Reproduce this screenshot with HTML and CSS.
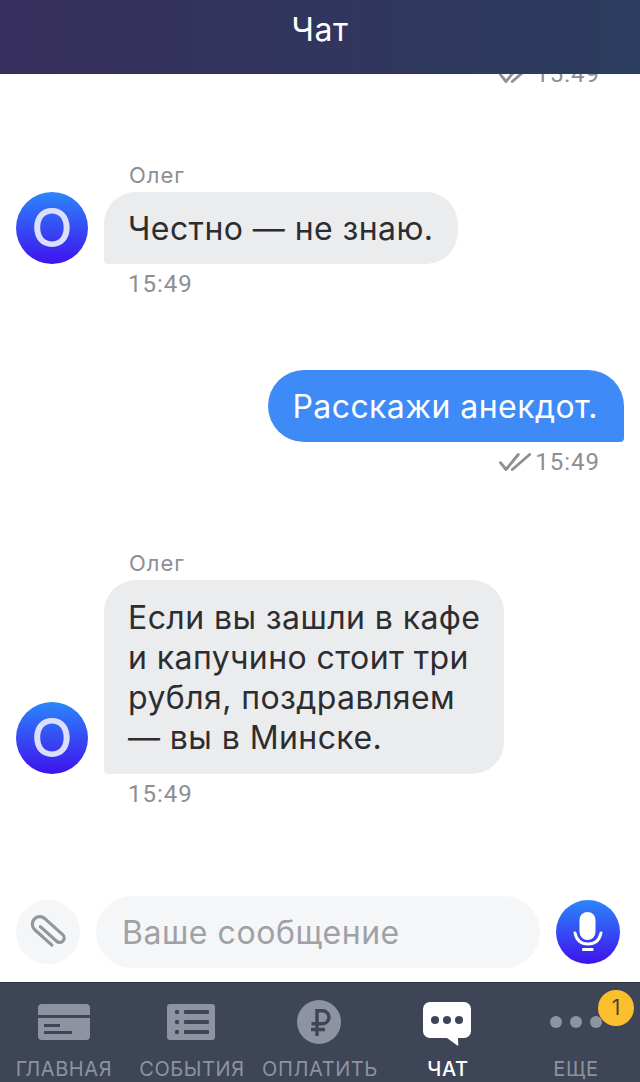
FILE: index.html
```html
<!DOCTYPE html>
<html lang="ru">
<head>
<meta charset="utf-8">
<title>Чат</title>
<link rel="stylesheet" href="styles.css">
</head>
<body>
<div class="app">
  <header class="top"><h1 class="title">Чат</h1></header>
  <main class="feed">
    <div class="clip-time">
      <div class="time-row">
        <svg class="ticks" viewBox="0 0 32 18" width="32" height="18"><path d="M1.500 9.700L7 16.500 19.300 1.500M13.300 16.500L30.700 1.500" fill="none" stroke="#8e8e93" stroke-width="2.800" stroke-linecap="round" stroke-linejoin="round"/></svg>
        <span class="time">15:49</span>
      </div>
    </div>

    <section class="msg in first">
      <div class="name">Олег</div>
      <div class="line">
        <div class="ava">O</div>
        <div class="bubble grey">Честно — не знаю.</div>
      </div>
      <div class="time stamp">15:49</div>
    </section>

    <section class="msg out">
      <div class="bubble blue">Расскажи анекдот.</div>
      <div class="time-row">
        <svg class="ticks" viewBox="0 0 32 18" width="32" height="18"><path d="M1.500 9.700L7 16.500 19.300 1.500M13.300 16.500L30.700 1.500" fill="none" stroke="#8e8e93" stroke-width="2.800" stroke-linecap="round" stroke-linejoin="round"/></svg>
        <span class="time">15:49</span>
      </div>
    </section>

    <section class="msg in second">
      <div class="name">Олег</div>
      <div class="line">
        <div class="ava">O</div>
        <div class="bubble grey wide">Если вы зашли в кафе<br>и капучино стоит три<br>рубля, поздравляем<br>— вы в Минске.</div>
      </div>
      <div class="time stamp">15:49</div>
    </section>
  </main>

  <div class="composer">
    <div class="round clip">
      <svg viewBox="0 0 64 64" width="64" height="64"><path transform="translate(32 31.500) rotate(-48)" d="M-7.500 12V-11a7.500 7.500 0 0 1 15 0V13a4.500 4.500 0 0 1-9 0V-9" fill="none" stroke="#94959d" stroke-width="3.200" stroke-linecap="round"/></svg>
    </div>
    <div class="field">Ваше сообщение</div>
    <div class="round mic">
      <svg viewBox="0 0 64 64" width="64" height="64"><rect x="23.500" y="12" width="16" height="28" rx="8" fill="#fff"/><path d="M19 33c1.500 7 6 11 13 11s11.500-4 13-11" fill="none" stroke="#fff" stroke-width="3" stroke-linecap="round"/><rect x="26" y="48" width="11.500" height="3" rx="1" fill="#fff"/></svg>
    </div>
  </div>

  <nav class="tabs">
    <div class="tab">
      <svg class="ic ic-card" viewBox="0 0 52 36" width="52" height="36"><path fill="#8d93a1" d="M4 0h44a4 4 0 0 1 4 4v7H0V4a4 4 0 0 1 4-4zM0 14h52v18a4 4 0 0 1-4 4H4a4 4 0 0 1-4-4z"/><rect x="6" y="20" width="16" height="3" fill="#3e4556"/><rect x="6" y="27" width="28" height="3" fill="#3e4556"/></svg>
      <span class="lab">ГЛАВНАЯ</span>
    </div>
    <div class="tab">
      <svg class="ic ic-list" viewBox="0 0 48 36" width="48" height="36"><rect width="48" height="36" rx="3" fill="#8d93a1"/><g fill="#3e4556"><circle cx="10" cy="8" r="2.200"/><circle cx="10" cy="18" r="2.200"/><circle cx="10" cy="28" r="2.200"/><rect x="17" y="6" width="25" height="4" rx="1"/><rect x="17" y="16" width="25" height="4" rx="1"/><rect x="17" y="26" width="25" height="4" rx="1"/></g></svg>
      <span class="lab">СОБЫТИЯ</span>
    </div>
    <div class="tab">
      <svg class="ic ic-pay" viewBox="0 0 44 44" width="44" height="44"><circle cx="22" cy="22" r="22" fill="#8d93a1"/><path d="M20 36V10.800h5.500a6.500 6.500 0 0 1 0 13H14.500M14 29.500h14" fill="none" stroke="#3e4556" stroke-width="3.400"/></svg>
      <span class="lab">ОПЛАТИТЬ</span>
    </div>
    <div class="tab active">
      <svg class="ic ic-chat" viewBox="0 0 48 44" width="48" height="44"><path fill="#fff" d="M7 0h34a7 7 0 0 1 7 7v22a7 7 0 0 1-7 7h-6l.300 7a.6.6 0 0 1-1 .5L24 36H7a7 7 0 0 1-7-7V7a7 7 0 0 1 7-7z"/><g fill="#3e4556"><circle cx="12" cy="18" r="4"/><circle cx="24" cy="18" r="4"/><circle cx="36" cy="18" r="4"/></g></svg>
      <span class="lab">ЧАТ</span>
    </div>
    <div class="tab">
      <svg class="ic ic-more" viewBox="0 0 52 12" width="52" height="12"><g fill="#8d93a1"><circle cx="6" cy="6" r="6"/><circle cx="26" cy="6" r="6"/><circle cx="46" cy="6" r="6"/></g></svg>
      <span class="lab">ЕЩЕ</span>
      <span class="badge">1</span>
    </div>
  </nav>
</div>
</body>
</html>
```
FILE: styles.css
```css
* { box-sizing: border-box; }
html, body { margin: 0; padding: 0; }
body { background: #fff; font-family: Inter, "Noto Sans", "Liberation Sans", sans-serif; }
.app { width: 640px; height: 1082px; display: flex; flex-direction: column; overflow: hidden; position: relative; }
.top { height: 74px; flex: none; background: linear-gradient(90deg, #372e5c 0%, #2b3d5e 100%); display: flex; align-items: center; justify-content: center; padding-bottom: 14px; }
.title { margin: 0; color: #fff; font-size: 32px; font-weight: 400; line-height: 40px; letter-spacing: .6px; }
.feed { height: 816px; flex: none; display: flex; flex-direction: column; overflow: hidden; }
.clip-time { height: 15px; overflow: hidden; display: flex; justify-content: flex-end; align-items: flex-end; }
.time-row { display: flex; align-items: center; justify-content: flex-end; padding-right: 40px; height: 30px; gap: 4px; flex: none; }
.ticks { flex: none; }
.time { font-size: 24px; line-height: 30px; color: #8e8e93; font-family: Roboto, Inter, sans-serif; letter-spacing: 1px; }
.msg { display: flex; flex-direction: column; }
.name { font-size: 22px; line-height: 24px; color: #8e8e93; padding-left: 129px; height: 29px; letter-spacing: 1px; }
.first { margin-top: 74px; }
.out { margin-top: 71px; align-items: flex-end; padding-right: 16px; }
.out .time-row { padding-right: 24px; margin-top: 5px; }
.second { margin-top: 74px; }
.line { display: flex; align-items: flex-end; padding-left: 16px; gap: 16px; }
.ava { width: 72px; height: 72px; flex: none; border-radius: 50%; background: linear-gradient(180deg, #2b86fb 0%, #3f12ee 100%); color: #dcdffa; font-size: 54px; font-weight: 500; line-height: 72px; text-align: center; }
.bubble { font-size: 32px; line-height: 40px; padding: 17px 25px 15px 24px; letter-spacing: .42px; white-space: nowrap; }
.grey { background: #ebecee; color: #2d2d30; border-radius: 32px 32px 32px 4px; }
.blue { background: #3e8bf7; color: #fff; border-radius: 36px 36px 4px 36px; padding-right: 26px; }
.wide { width: 400px; padding-top: 18px; padding-bottom: 16px; }
.stamp { padding-left: 128px; margin-top: 5px; display: block; }
.composer { height: 92px; flex: none; display: flex; align-items: center; padding: 0 20px 0 16px; gap: 16px; position: absolute; left: 0; right: 0; top: 886px; }
.round { width: 64px; height: 64px; border-radius: 50%; flex: none; display: flex; align-items: center; justify-content: center; }
.clip { background: #f5f6f8; }
.mic { background: linear-gradient(180deg, #2b86fb 0%, #3f12ee 100%); }
.field { width: 444px; height: 72px; flex: none; border-radius: 36px; background: #f5f6f8; color: #a0a1a7; font-size: 32px; line-height: 74px; padding-left: 26px; letter-spacing: .55px; }
.tabs { position: absolute; left: 0; right: 0; bottom: 0; height: 100px; background: #3e4556; border-top: 1px solid #2c3342; display: flex; }
.tab { flex: 1 1 0; position: relative; display: flex; flex-direction: column; align-items: center; color: #8d93a1; }
.ic { position: absolute; left: 50%; transform: translateX(-50%); }
.ic-card, .ic-list { top: 21px; }
.ic-list { margin-left: -1px; }
.ic-pay { top: 17px; margin-left: -1px; }
.ic-chat { top: 19px; margin-left: -1px; }
.ic-more { top: 33px; }
.lab { position: absolute; top: 74px; font-size: 20px; line-height: 24px; letter-spacing: .6px; white-space: nowrap; }
.active { color: #fff; }
.active .lab { font-weight: 500; }
.tab .badge { position: absolute; top: 7px; left: 86px; width: 36px; height: 36px; border-radius: 50%; background: #fbbf2d; color: #4a4330; font-size: 21px; line-height: 36px; text-align: center; }
```
